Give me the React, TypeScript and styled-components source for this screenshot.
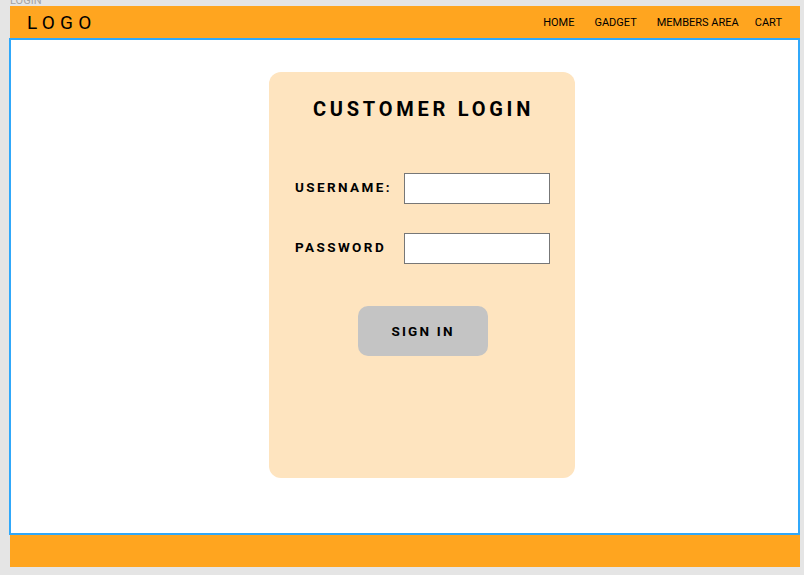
import React from "react";
import styled, { createGlobalStyle } from "styled-components";

const GlobalStyle = createGlobalStyle`
  html, body {
    margin: 0;
    padding: 0;
    background: #e5e5e5;
    font-family: Roboto, "Liberation Sans", Arial, sans-serif;
  }
  * { box-sizing: border-box; }
`;

const Canvas = styled.div`
  width: 804px;
  height: 575px;
  background: #e5e5e5;
  padding-left: 10px;
  overflow: hidden;
  display: flow-root;
`;

const FrameLabel = styled.div`
  height: 6px;
  font-size: 11px;
  line-height: 11px;
  color: #a3a3a3;
  overflow: visible;
  & > span {
    display: block;
    transform: translateY(-5px);
  }
`;

const Frame = styled.div`
  width: 790px;
  display: flex;
  flex-direction: column;
`;

const Header = styled.header`
  height: 32px;
  background: #ffa51f;
  display: flex;
  align-items: center;
  justify-content: space-between;
  padding: 0 18px 0 17px;
`;

const Logo = styled.div`
  font-size: 19px;
  font-weight: 400;
  letter-spacing: 5.2px;
  color: #000;
`;

const Nav = styled.nav`
  display: flex;
  align-items: center;
`;

const NavItem = styled.span<{ $gap?: number }>`
  font-size: 11px;
  color: #000;
  margin-left: ${(p) => p.$gap ?? 0}px;
`;

const Main = styled.main`
  height: 497px;
  margin-left: -1px;
  width: 791px;
  border: 2px solid #30a8fa;
  background: #fff;
  padding: 32px 0 0 258px;
`;

const Card = styled.section`
  width: 306px;
  height: 406px;
  background: #fee4bf;
  border-radius: 12px;
  padding: 25px 25px 0 26px;
  display: flex;
  flex-direction: column;
`;

const Title = styled.h1`
  margin: 0;
  font-size: 20px;
  line-height: 24px;
  font-weight: 700;
  letter-spacing: 3.75px;
  text-align: center;
  padding-left: 2px;
  color: #000;
`;

const Form = styled.div`
  margin-top: 52px;
  display: grid;
  grid-template-columns: 1fr 146px;
  row-gap: 29px;
  align-items: center;
`;

const Label = styled.label`
  font-size: 13.5px;
  font-weight: 700;
  letter-spacing: 2.4px;
  color: #000;
  padding-bottom: 3px;
`;

const Input = styled.input`
  width: 146px;
  height: 31px;
  border: 1px solid #777;
  background: #fff;
  margin: 0;
  padding: 0 4px;
  outline: none;
`;

const ButtonRow = styled.div`
  margin-top: 42px;
  display: flex;
  justify-content: center;
`;

const SignIn = styled.button`
  width: 130px;
  height: 50px;
  border: none;
  border-radius: 10px;
  background: #c4c4c4;
  font-family: Roboto, "Liberation Sans", Arial, sans-serif;
  font-size: 13.5px;
  font-weight: 700;
  letter-spacing: 2.2px;
  color: #000;
  padding: 0 0 0 1px;
`;

const Footer = styled.footer`
  height: 32px;
  background: #ffa51f;
`;

export default function App() {
  return (
    <>
      <GlobalStyle />
      <Canvas>
        <FrameLabel>
          <span>LOGIN</span>
        </FrameLabel>
        <Frame>
          <Header>
            <Logo>LOGO</Logo>
            <Nav>
              <NavItem>HOME</NavItem>
              <NavItem $gap={20}>GADGET</NavItem>
              <NavItem $gap={20}>MEMBERS AREA</NavItem>
              <NavItem $gap={16}>CART</NavItem>
            </Nav>
          </Header>
          <Main>
            <Card>
              <Title>CUSTOMER LOGIN</Title>
              <Form>
                <Label htmlFor="username">USERNAME:</Label>
                <Input id="username" type="text" />
                <Label htmlFor="password">PASSWORD</Label>
                <Input id="password" type="password" />
              </Form>
              <ButtonRow>
                <SignIn>SIGN IN</SignIn>
              </ButtonRow>
            </Card>
          </Main>
          <Footer />
        </Frame>
      </Canvas>
    </>
  );
}
